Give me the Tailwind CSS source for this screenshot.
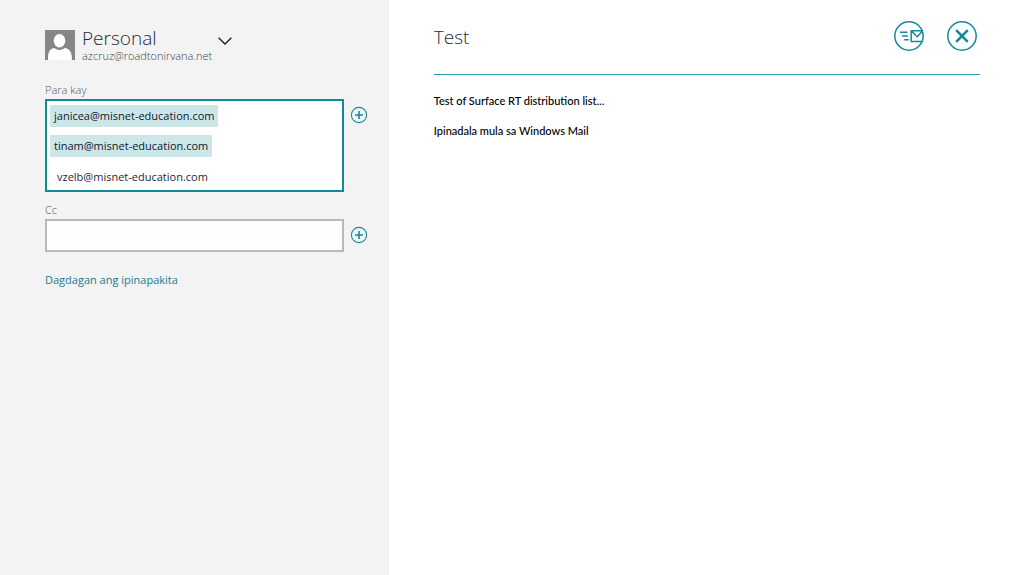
<!DOCTYPE html>
<html lang="fil">
<head>
  <meta charset="UTF-8" />
  <meta name="viewport" content="width=device-width, initial-scale=1.0"/>
  <title>Mail</title>
  <script src="https://cdn.jsdelivr.net/npm/@tailwindcss/browser@4"></script>
</head>
<body class="flex min-h-screen bg-white font-['Open_Sans',sans-serif] text-gray-900">

<!-- Account and recipients -->
<aside class="w-[38%] shrink-0 bg-[#f3f3f3] pl-[45px] pr-[21px] pt-[26px]">
  <button type="button" aria-haspopup="menu" class="flex items-start text-left">
    <svg class="mt-1 mr-[7px] size-[30px] shrink-0" viewBox="0 0 30 30">
      <path fill="#868686" d="M0 0h30v30H0z"/>
      <ellipse cx="14.5" cy="10.800" rx="5.800" ry="6.700" fill="#fff"/>
      <path fill="#fff" d="M3 30c0-7 .8-11 6.300-12 1.500 1.300 3.200 1.900 5.200 1.900s3.700-.6 5.200-1.900C25.500 19 27 23 27 30z"/>
    </svg>
    <span>
      <span class="block text-[19px] leading-6 font-light text-gray-800">Personal</span>
      <span class="block text-[11px] leading-3 font-light text-[#444]">azcruz@roadtonirvana.net</span>
    </span>
    <svg class="mt-[11px] ml-1.5 h-2 w-3.5" viewBox="0 0 14 8" fill="none" stroke="#222" stroke-width="1.4">
      <path d="M.6.7 7 7 13.400.7"/>
    </svg>
  </button>

  <form class="mt-5">
    <label for="to" class="block text-[11px] leading-4 font-light text-[#555]">Para kay</label>
    <div class="mt-px flex items-start gap-1.5">
      <div class="flex grow flex-col items-start gap-2 border-2 border-[#138a9c] bg-white p-[3px] pt-1">
        <button type="button" class="h-[22px] bg-[#cde6ea] px-1 text-[11px]">janicea@misnet-education.com</button>
        <button type="button" class="h-[22px] bg-[#cde6ea] px-1 text-[11px]">tinam@misnet-education.com</button>
        <input id="to" type="text" value="vzelb@misnet-education.com" class="h-[22px] w-full px-[7px] text-[11px] text-gray-800 outline-none">
      </div>
      <button type="button" aria-label="Magdagdag sa Para kay" class="mt-[7px]">
        <svg class="size-[18px]" viewBox="0 0 18 18" fill="none" stroke="#138a9c">
          <circle cx="9" cy="9" r="7.600" stroke-width="1.100"/>
          <path stroke-width="1.600" d="M9 5v8M5 9h8"/>
        </svg>
      </button>
    </div>

    <label for="cc" class="mt-2.5 block text-[11px] leading-4 font-light text-[#555]">Cc</label>
    <div class="mt-px flex items-start gap-1.5">
      <input id="cc" type="text" class="h-[33px] min-w-0 grow border-2 border-[#bababa] bg-[#fdfdfd] px-2 text-[11px]">
      <button type="button" aria-label="Magdagdag sa Cc" class="mt-[7px]">
        <svg class="size-[18px]" viewBox="0 0 18 18" fill="none" stroke="#138a9c">
          <circle cx="9" cy="9" r="7.600" stroke-width="1.100"/>
          <path stroke-width="1.600" d="M9 5v8M5 9h8"/>
        </svg>
      </button>
    </div>

    <a href="#" class="mt-5 inline-block text-[11px] leading-4 text-[#1b7a8b]">Dagdagan ang ipinapakita</a>
  </form>
</aside>

<!-- Message -->
<main class="min-w-0 grow pt-[21px] pr-[43px] pl-[45px]">
  <header class="flex h-[54px] items-start border-b border-[#2b9bad]">
    <input type="text" value="Test" aria-label="Paksa" class="h-8 min-w-0 grow text-[19px] font-light text-gray-800 outline-none">
    <div class="flex gap-[23px] pr-[3px]">
      <button type="button" aria-label="Ipadala">
        <svg class="size-[30px]" viewBox="0 0 30 30" fill="none" stroke="#138a9c" stroke-width="1.500">
          <circle cx="15" cy="15" r="14.200"/>
          <path d="M6 11.200h7.500M8 15h6M10.200 18.800h4.500M28.500 9.700H17.200v10.800h11M17.500 10l5.800 5.700 5.200-5.700"/>
        </svg>
      </button>
      <button type="button" aria-label="Isara">
        <svg class="size-[30px]" viewBox="0 0 30 30" fill="none" stroke="#138a9c">
          <circle cx="15" cy="15" r="14.200" stroke-width="1.500"/>
          <path stroke-width="2.600" d="m9.200 9.200 11.600 11.600m0-11.600L9.200 20.800"/>
        </svg>
      </button>
    </div>
  </header>
  <div contenteditable="true" role="textbox" aria-label="Mensahe" class="space-y-3.5 pt-[18px] font-['Lato',sans-serif] text-[11px] leading-4 font-medium text-black outline-none">
    <p>Test of Surface RT distribution list...</p>
    <p>Ipinadala mula sa Windows Mail</p>
  </div>
</main>

</body>
</html>
